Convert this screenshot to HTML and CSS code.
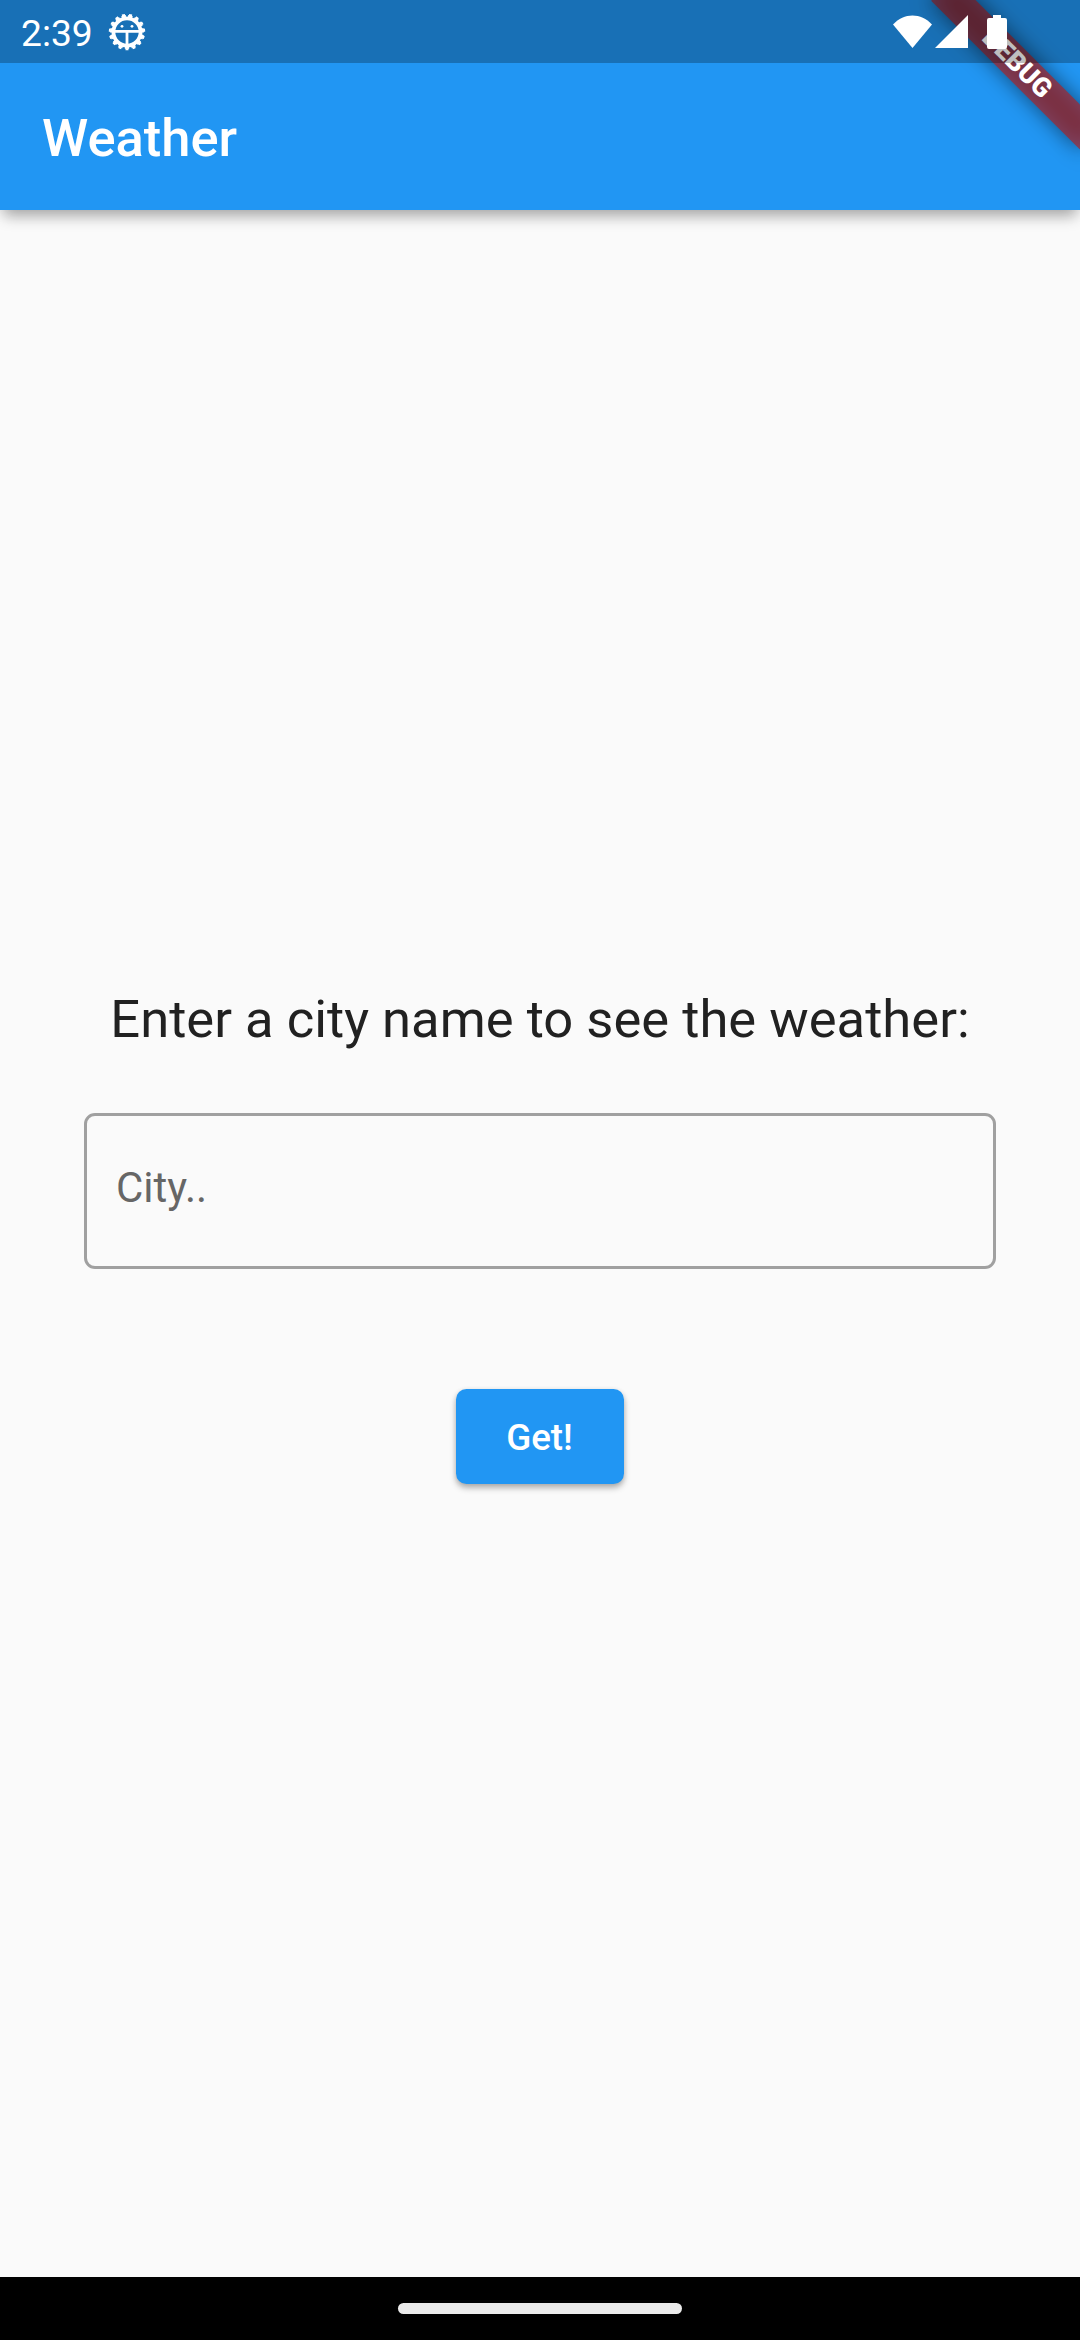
FILE: index.html
```html
<!DOCTYPE html>
<html lang="en">
<head>
<meta charset="utf-8">
<title>Weather</title>
<link rel="stylesheet" href="styles.css">
</head>
<body>
<div class="screen">
  <header class="header">
    <div class="status-bar">
      <span class="clock">2:39</span>
      <svg class="bug" width="38" height="38" viewBox="-19 -19 38 38">
        <circle r="13.6" fill="none" stroke="#fff" stroke-width="3.8"/>
        <g fill="none" stroke="#fff" transform="rotate(90)">
          <circle r="15.8" stroke-width="2.4" pathLength="15" stroke-dasharray="0.66 0.34" stroke-dashoffset="0.33"/>
          <circle r="17.3" stroke-width="1.8" pathLength="15" stroke-dasharray="0.42 0.58" stroke-dashoffset="0.21"/>
        </g>
        <path d="M-13-0.6H13M0 0V14" stroke="#fff" stroke-width="2.8"/>
        <circle cx="-5" cy="-5.7" r="1.4" fill="#fff"/>
        <circle cx="5" cy="-5.7" r="1.4" fill="#fff"/>
      </svg>
      <svg class="signals" width="115" height="36" viewBox="892 13 115 36" fill="#fff">
        <path d="M892 23.5C903 11.5 920 11.5 931 23.5L911.5 47Z"/>
        <path d="M934 47L967 14V47Z"/>
        <path d="M992 14h8v3h4q2 0 2 2v27q0 2-2 2h-16q-2 0-2-2v-27q0-2 2-2h4z"/>
      </svg>
    </div>
    <h1 class="title">Weather</h1>
  </header>
  <div class="banner-clip"><div class="banner">DEBUG</div></div>
  <main class="content">
    <label class="prompt" for="city">Enter a city name to see the weather:</label>
    <input class="city" id="city" type="text" placeholder="City..">
    <button class="get" type="button">Get!</button>
  </main>
  <footer class="nav-bar"><span class="handle"></span></footer>
</div>
</body>
</html>
```
FILE: styles.css
```css
* { box-sizing: border-box; }

body {
  margin: 0;
  background: #fafafa;
  font-family: Roboto, sans-serif;
}

.screen {
  position: relative;
  display: flex;
  flex-direction: column;
  width: 1080px;
  height: 2340px;
  overflow: hidden;
}

.header {
  height: 210px;
  background: #2196f3;
  color: #fff;
  box-shadow: 0 10px 14px -4px rgba(0, 0, 0, 0.3), 0 2px 14px rgba(0, 0, 0, 0.08);
}

/* Translucent tint shades both the header and the ribbon beneath it */
.status-bar {
  position: relative;
  z-index: 2;
  display: flex;
  align-items: center;
  height: 63px;
  padding: 0 72px 0 21px;
  background: rgba(0, 0, 0, 0.25);
}

.clock {
  width: 72px;
  font-size: 37.2px;
  line-height: 44px;
  padding-top: 2px;
}

.bug { margin-left: 15px; }

.signals { margin-left: auto; }

.title {
  margin: 0;
  padding-left: 42px;
  font-size: 52.5px;
  font-weight: 500;
  line-height: 150px;
}

/* Diagonal ribbon pinned over the top right corner */
.banner-clip {
  position: absolute;
  z-index: 1;
  top: 0;
  right: 0;
  width: 240px;
  height: 240px;
  overflow: hidden;
}

.banner {
  position: absolute;
  top: 73.5px;
  left: 135px;
  width: 210px;
  height: 31.5px;
  transform: rotate(45deg);
  transform-origin: 105px -73.5px;
  color: #fff;
  font-size: 26.775px;
  font-weight: 900;
  line-height: 31.5px;
  text-align: center;
}

.banner::before,
.banner::after {
  content: "";
  position: absolute;
  inset: 0;
  z-index: -1;
}

.banner::before {
  background: rgba(0, 0, 0, 0.5);
  filter: blur(10.4px);
}

.banner::after { background: rgba(183, 28, 28, 0.63); }

.content {
  flex: 1;
  display: flex;
  flex-direction: column;
  align-items: center;
  justify-content: center;
  padding: 0 84px 15px;
}

.prompt {
  color: #212121;
  font-size: 52.5px;
  line-height: 62px;
  letter-spacing: 0.02px;
}

.city {
  width: 912px;
  height: 156px;
  margin: 63px 0 120px;
  padding: 0 29px 8px;
  border: 3px solid #a0a0a0;
  border-radius: 11px;
  background: transparent;
  color: #212121;
  font: 42px Roboto, sans-serif;
}

.city::placeholder { color: #666; opacity: 1; }

.get {
  width: 168px;
  height: 95px;
  padding: 1px 1px 0 0;
  border: 0;
  border-radius: 10.5px;
  background: #2196f3;
  box-shadow: 0 4px 6px rgba(0, 0, 0, 0.28), 0 1px 5px rgba(0, 0, 0, 0.1);
  color: #fff;
  font: 500 36.75px Roboto, sans-serif;
}

.nav-bar {
  display: flex;
  align-items: center;
  justify-content: center;
  height: 63px;
  background: #000;
}

.handle {
  width: 284px;
  height: 11px;
  border-radius: 6px;
  background: #ebebeb;
}
```
